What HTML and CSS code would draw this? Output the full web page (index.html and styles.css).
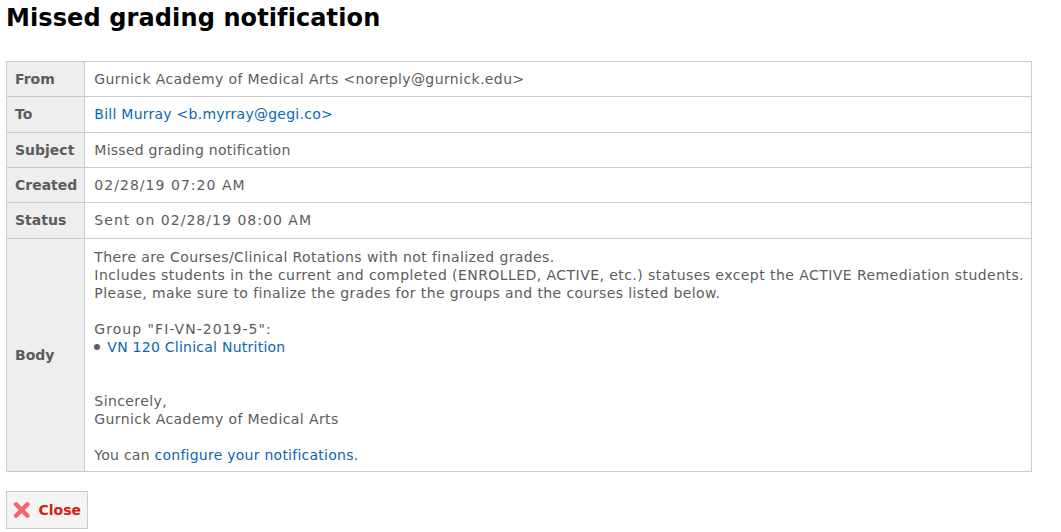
FILE: index.html
```html
<!DOCTYPE html>
<html lang="en">
<head>
    <meta charset="UTF-8">
    <title>Missed grading notification</title>
    <link rel="stylesheet" href="styles.css">
</head>
<body>
    <h1>Missed grading notification</h1>

    <table class="details">
        <tr>
            <th>From</th>
            <td>Gurnick Academy of Medical Arts &lt;noreply@gurnick.edu&gt;</td>
        </tr>
        <tr>
            <th>To</th>
            <td class="tight"><a href="#">Bill Murray &lt;b.myrray@gegi.co&gt;</a></td>
        </tr>
        <tr>
            <th>Subject</th>
            <td class="tight">Missed grading notification</td>
        </tr>
        <tr>
            <th>Created</th>
            <td class="wide">02/28/19 07:20 AM</td>
        </tr>
        <tr>
            <th>Status</th>
            <td class="wide">Sent on 02/28/19 08:00 AM</td>
        </tr>
        <tr>
            <th>Body</th>
            <td class="body-cell">
                There are Courses/Clinical Rotations with not finalized grades.<br>
                <span class="long">Includes students in the current and completed (ENROLLED, ACTIVE, etc.) statuses except the ACTIVE Remediation students.</span><br>
                Please, make sure to finalize the grades for the groups and the courses listed below.<br>
                <br>
                <span class="wide">Group "FI-VN-2019-5":</span>
                <ul class="courses">
                    <li class="tight"><a href="#">VN 120 Clinical Nutrition</a></li>
                </ul>
                <br>
                <br>
                Sincerely,<br>
                Gurnick Academy of Medical Arts<br>
                <br>
                <span class="tight">You can <a href="#">configure your notifications</a>.</span>
            </td>
        </tr>
    </table>

    <button class="close-btn">
        <svg width="20" height="20" viewBox="0 0 20 20">
            <path d="M3.5 3.5 L16.5 16.5 M16.5 3.5 L3.5 16.5" stroke="#f4646e" stroke-width="5" stroke-linecap="round"/>
        </svg>
        Close
    </button>
</body>
</html>
```

FILE: styles.css
```css
body {
    margin: 0;
    padding: 0 6px;
    background-color: white;
    font-family: "DejaVu Sans", Verdana, sans-serif;
    font-size: 14px;
    line-height: 18px;
    color: #5c5c5c;
}

h1 {
    margin: 0;
    padding: 2px 0 27px;
    color: black;
    font-size: 24px;
    line-height: 32px;
    letter-spacing: 0.11px;
}

a {
    color: #0b66b5;
    text-decoration: none;
}

.details {
    width: 1026px;
    border-collapse: collapse;
}

.details th, .details td {
    border: 1px solid #ccc;
    padding: 8.17px 4px 8.17px 9px;
    text-align: left;
    font-size: 14px;
}

.details td {
    letter-spacing: 0.4px;
}

.details td.tight, .tight {
    letter-spacing: 0.25px;
}

.details td.wide, .wide {
    letter-spacing: 1.03px;
}

.long {
    letter-spacing: 0.44px;
}

.details td.body-cell {
    padding-top: 9px;
    padding-bottom: 7.33px;
}

.details th {
    width: 62px;
    padding-left: 8px;
    padding-right: 7px;
    background-color: #eee;
    color: #5c5c5c;
    white-space: nowrap;
}

.courses {
    margin: 0;
    padding: 0;
    list-style: none;
}

.courses li {
    display: flex;
}

.courses li::before {
    content: "";
    width: 6px;
    height: 6px;
    margin: 6px 7px 0 0;
    border-radius: 50%;
    background-color: #5c5c5c;
}

.close-btn {
    display: flex;
    align-items: center;
    gap: 8px;
    margin-top: 19px;
    height: 38px;
    width: 82px;
    padding: 0 6px;
    border: 1px solid #ccc;
    background-color: #f4f4f4;
    color: #d0200c;
    font-family: "DejaVu Sans", Verdana, sans-serif;
    font-size: 14px;
    font-weight: bold;
}
```
